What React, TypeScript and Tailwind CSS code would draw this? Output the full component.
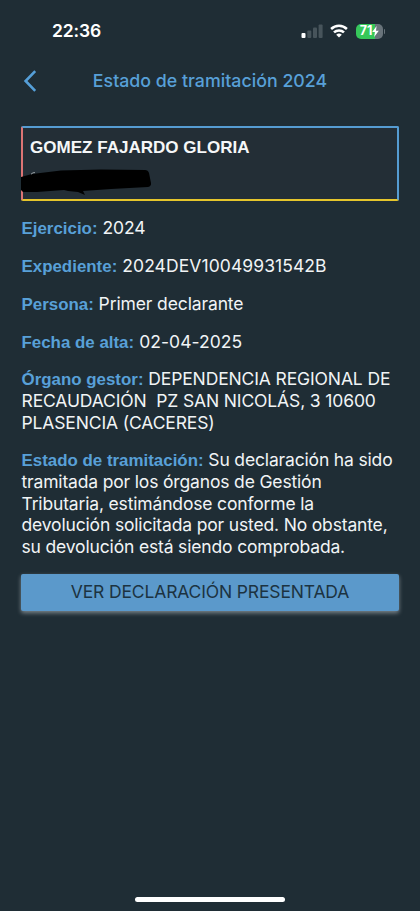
import type { ReactNode } from "react";
import clsx from "clsx";

type FieldProps = {
  label: string;
  className?: string;
  children: ReactNode;
};

function Field({ label, className, children }: FieldProps) {
  return (
    <p className="whitespace-pre text-[17.5px] leading-[21.6px] text-[#f1f4f5]">
      <strong className="font-['Liberation_Sans',sans-serif] text-[16.9px] font-bold leading-none text-[#58a0d8]">
        {label}:
      </strong>
      <span className={clsx("leading-[21.6px]", className)}> {children}</span>
    </p>
  );
}

function StatusBar() {
  return (
    <div className="flex h-[62px] items-center justify-between pl-[52px] pr-[35px]">
      <span className="text-[17.5px] font-semibold tracking-[-0.1px] text-white">22:36</span>
      <div className="flex items-center">
        <svg width="22" height="14" viewBox="0 0 22 14">
          <rect x="0.5" y="9" width="4" height="5" rx="1" fill="#fff" />
          <rect x="6.3" y="6.5" width="4" height="7.5" rx="1" fill="#47545b" />
          <rect x="12" y="3.5" width="4" height="10.5" rx="1" fill="#47545b" />
          <rect x="17.6" y="0.5" width="4" height="13.5" rx="1" fill="#47545b" />
        </svg>
        <svg className="ml-[7px]" width="18" height="14" viewBox="0 0 18 14">
          <path
            d="M1.1 5a11.4 11.4 0 0 1 15.8 0M4 8.4a7.2 7.2 0 0 1 10 0"
            fill="none"
            stroke="#fff"
            strokeWidth="2.5"
          />
          <path d="M9 13.6 6.2 10.8a4.1 4.1 0 0 1 5.6 0Z" fill="#fff" />
        </svg>
        <div className="ml-2 flex items-center">
          <div className="flex h-[15px] w-[27px] items-center justify-center rounded-[5px] bg-linear-to-r from-[#36c75a] from-72% to-[#68737a] to-72% pl-px">
            <span className="pt-px text-[12.5px] font-bold leading-none text-white">71</span>
            <svg width="7" height="11" viewBox="0 0 7 11">
              <path d="M4.6 0 0.2 6.1h2.7L2.2 11 6.8 4.7H4Z" fill="#fff" />
            </svg>
          </div>
          <span className="ml-px h-[5px] w-[1.5px] rounded-r-full bg-[#68737a]" />
        </div>
      </div>
    </div>
  );
}

export default function App() {
  return (
    <div className="flex h-[911px] w-[420px] flex-col overflow-hidden bg-[#1f2d35] font-[Inter,sans-serif]">
      <StatusBar />

      <header className="grid h-[38px] grid-cols-[62px_1fr_62px] items-center">
        <svg className="ml-[23px]" width="14" height="22" viewBox="0 0 14 22">
          <path d="M12.2 1.2 2.6 11l9.6 9.8" fill="none" stroke="#559fd8" strokeWidth="2.6" />
        </svg>
        <h1 className="whitespace-nowrap text-center text-[17.8px] font-medium text-[#58a0d8]">
          Estado de tramitación 2024
        </h1>
      </header>

      <main className="mt-[26px] flex flex-col px-[21px]">
        <section className="h-[75px] w-[378px] rounded-[2px] border-2 border-b-[#e5c52c] border-l-[#dc7474] border-r-[#559cd2] border-t-[#559cd2] bg-[#232e36] pl-[7px] pt-[8px]">
          <p className="font-['Liberation_Sans',sans-serif] text-[17.05px] font-bold leading-[23px] text-[#f5f7f8]">
            GOMEZ FAJARDO GLORIA
          </p>
          <svg className="-ml-[9px] mt-[10px]" width="132" height="29" viewBox="0 0 132 29">
            <path
              d="M0 8 11 5 40 1.5 80 .5 124 1q3 0 4 3l2 10q.5 3-3 4L90 20l-28 2 2 4-7-3-10-1-4-1-27 2-14 0-2-2Z"
              fill="#000"
            />
            <path d="M10 5.2q2-2 4-1.6" stroke="#9aa1a5" fill="none" />
          </svg>
        </section>

        <div className="mt-[16.3px] flex flex-col gap-[16.2px] pl-[0.5px]">
          <Field label="Ejercicio" className="tracking-[-0.1px]">
            2024
          </Field>
          <Field label="Expediente" className="tracking-[0.08px]">
            2024DEV10049931542B
          </Field>
          <Field label="Persona" className="tracking-[-0.12px]">
            Primer declarante
          </Field>
          <Field label="Fecha de alta" className="tracking-[0.05px]">
            02-04-2025
          </Field>
          <Field label="Órgano gestor" className="tracking-[-0.13px]">
            DEPENDENCIA REGIONAL DE{"\n"}
            RECAUDACIÓN{"  "}PZ SAN NICOLÁS, 3 10600{"\n"}
            PLASENCIA (CACERES)
          </Field>
          <Field label="Estado de tramitación" className="tracking-[-0.16px]">
            Su declaración ha sido{"\n"}
            tramitada por los órganos de Gestión{"\n"}
            Tributaria, estimándose conforme la{"\n"}
            devolución solicitada por usted. No obstante,{"\n"}
            su devolución está siendo comprobada.
          </Field>
        </div>

        <button className="mt-[16.6px] h-[37px] w-[378px] rounded-[2px] bg-[#5b99cb] text-[17.5px] tracking-[-0.15px] text-[#1c3341] shadow-[0_2px_4px_#7b868c]">
          VER DECLARACIÓN PRESENTADA
        </button>
      </main>

      <div className="mb-[9px] ml-[135px] mt-auto h-[5px] w-[150px] rounded-full bg-white" />
    </div>
  );
}
